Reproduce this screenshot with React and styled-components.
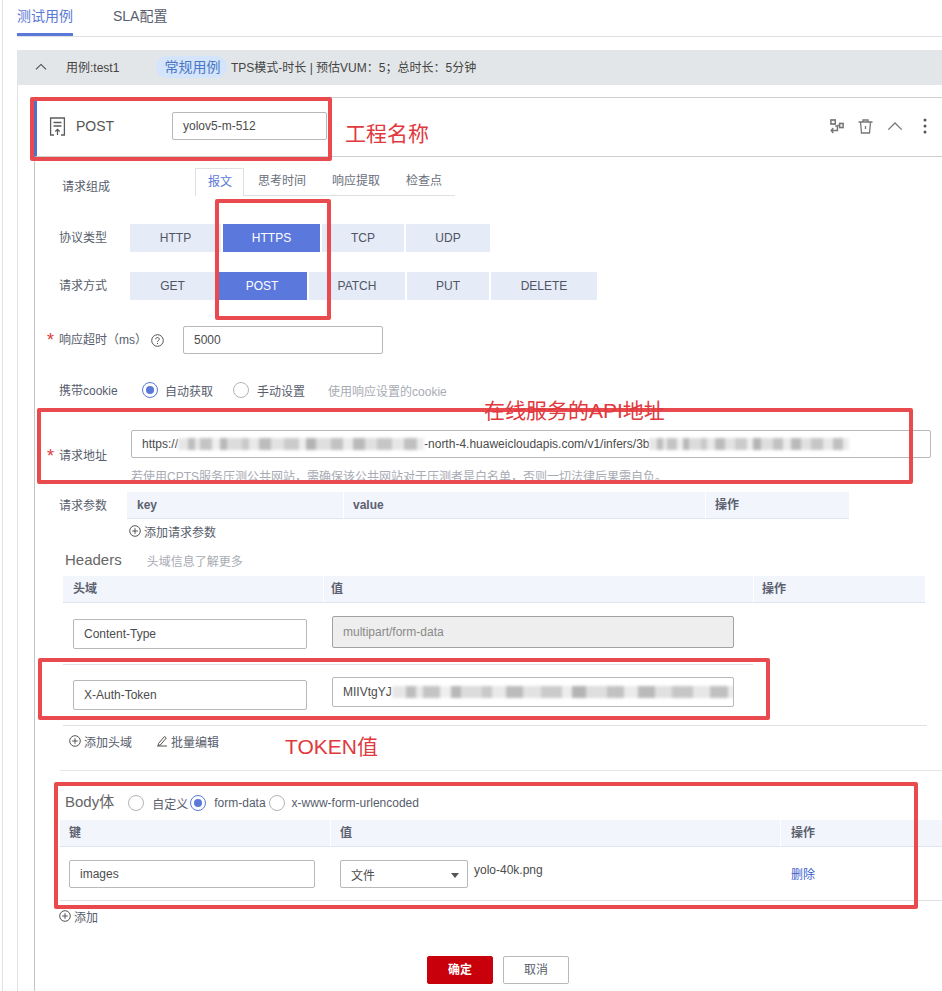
import React from "react";
import styled, { createGlobalStyle } from "styled-components";

const GlobalStyle = createGlobalStyle`
  html, body {
    margin: 0;
    padding: 0;
    background: #fff;
  }
  body {
    font-family: "Liberation Sans", "Noto Sans CJK SC", sans-serif;
    font-size: 12px;
    color: #575d6c;
  }
`;

const Page = styled.div`
  position: relative;
  width: 942px;
  height: 991px;
  overflow: hidden;
  box-sizing: border-box;
  padding-left: 2px;
`;

const Shell = styled.div`
  border-left: 1px solid #e2e2e2;
  padding-left: 14px;
  height: 100%;
`;

const TopTabs = styled.div`
  display: flex;
  height: 36px;
  gap: 40px;
  border-bottom: 1px solid #dfe1e6;
`;

const TopTab = styled.div`
  height: 36px;
  box-sizing: border-box;
  padding-top: 8px;
  font-size: 14px;
  line-height: 16px;
  color: ${(p) => (p.$active ? "#5a78d8" : "#575d6c")};
  border-bottom: ${(p) => (p.$active ? "3px solid #5a78d8" : "none")};
`;

const CaseBar = styled.div`
  display: flex;
  align-items: center;
  box-sizing: border-box;
  margin-top: 13px;
  height: 35px;
  background: #e3e6e8;
  padding: 0 0 2px 18px;
  color: #444;
`;

const CaseName = styled.span`
  margin-left: 19px;
  width: 90px;
`;

const Pill = styled.span`
  width: 71px;
  height: 22px;
  line-height: 22px;
  box-sizing: border-box;
  padding-left: 2px;
  text-align: center;
  border-radius: 11px;
  background: #d3e4fb;
  color: #4a76c4;
  font-size: 14px;
  margin-right: 4px;
`;

const CaseBody = styled.div`
  border-left: 1px solid #e2e2e2;
  padding: 12px 0 0 16px;
  height: 906px;
`;

const Panel = styled.div`
  border-left: 1px solid #c4c4c4;
  padding-left: 1px;
  height: 100%;
`;

const PanelHeader = styled.div`
  display: flex;
  align-items: center;
  box-sizing: border-box;
  height: 60px;
  margin-left: -2px;
  border-top: 1px solid #cfcfcf;
  border-bottom: 1px solid #cfcfcf;
  border-left: 3px solid #5470c6;
  padding: 0 0 2px 12px;
`;

const MethodName = styled.span`
  margin-left: 10px;
  width: 96px;
  font-size: 14px;
  color: #555;
`;

const TextInput = styled.div`
  display: flex;
  align-items: center;
  box-sizing: border-box;
  width: ${(p) => p.$w}px;
  height: ${(p) => p.$h || 28}px;
  margin-top: ${(p) => p.$top || 0}px;
  padding-left: ${(p) => p.$pad || 10}px;
  border: 1px solid ${(p) => (p.$disabled ? "#a2a2a2" : "#b8b8b8")};
  border-radius: 2px;
  background: ${(p) => (p.$disabled ? "#eeeeee" : "#fff")};
  color: ${(p) => (p.$disabled ? "#8a8a8a" : "#4c4c4c")};
  white-space: nowrap;
  overflow: hidden;
  flex: none;
`;

const HeaderActions = styled.div`
  display: flex;
  align-items: center;
  margin-left: auto;
  gap: 14px;
  padding-right: 15px;
  color: #777;
`;

const MoreSlot = styled.span`
  display: flex;
  margin-left: 6px;
`;

const Row = styled.div`
  display: flex;
  align-items: ${(p) => p.$align || "center"};
  margin-top: ${(p) => p.$top || 0}px;
  padding-left: ${(p) => (p.$pad === undefined ? 23 : p.$pad)}px;
  height: ${(p) => (p.$h ? `${p.$h}px` : "auto")};
`;

const Label = styled.span`
  width: ${(p) => p.$w || 71}px;
  flex: none;
  margin-top: ${(p) => p.$down || 0}px;
  margin-bottom: ${(p) => (p.$lift === undefined ? 4 : p.$lift)}px;
  color: #575d6c;
  white-space: nowrap;
`;

const Star = styled.span`
  width: 12px;
  flex: none;
  margin-top: ${(p) => p.$down || 0}px;
  margin-bottom: ${(p) => (p.$lift === undefined ? 4 : p.$lift)}px;
  color: #e0393e;
  font-size: 18px;
  line-height: 14px;
  height: 10px;
`;

const SubTabs = styled.div`
  display: flex;
  width: 260px;
  height: 28px;
  box-sizing: border-box;
  border-bottom: 1px solid #dfe1e6;
`;

const SubTab = styled.div`
  flex: none;
  box-sizing: border-box;
  height: ${(p) => (p.$active ? 28 : 27)}px;
  line-height: 26px;
  padding: 0 ${(p) => (p.$active ? 11 : 12)}px 0 ${(p) => (p.$active ? 12 : 14)}px;
  white-space: nowrap;
  color: ${(p) => (p.$active ? "#5a78d8" : "#6a6f7c")};
  background: #fff;
  ${(p) => p.$active && "border: 1px solid #dfe1e6; border-bottom: none;"}
`;

const ChoiceGroup = styled.div`
  display: flex;
  gap: 2px;
`;

const Choice = styled.div`
  width: ${(p) => p.$w}px;
  height: 28px;
  line-height: 28px;
  text-align: center;
  background: ${(p) => (p.$active ? "#5b78dc" : "#e6ebf8")};
  color: ${(p) => (p.$active ? "#fff" : "#4f5563")};
`;

const HelpIcon = styled.svg`
  margin-left: 3px;
  margin-right: 19px;
  flex: none;
`;

const RadioMark = styled.span`
  display: inline-flex;
  align-items: center;
  justify-content: center;
  box-sizing: border-box;
  flex: none;
  width: 16px;
  height: 16px;
  border-radius: 50%;
  border: 1px solid ${(p) => (p.$on ? "#5a78d8" : "#b4b4b4")};
  margin-left: ${(p) => p.$left || 0}px;
  margin-right: ${(p) => p.$right}px;
  &::after {
    content: "";
    width: 8px;
    height: 8px;
    border-radius: 50%;
    background: ${(p) => (p.$on ? "#5a78d8" : "transparent")};
  }
`;

const RadioText = styled.span`
  color: #575d6c;
  margin-right: ${(p) => p.$right || 0}px;
  white-space: nowrap;
`;

const Hint = styled.span`
  color: #a8abb3;
  margin-left: ${(p) => p.$left || 0}px;
`;

const HintLine = styled.div`
  margin-top: 13px;
  margin-left: 95px;
  height: 12px;
  line-height: 12px;
  color: #a8abb3;
`;

const Mosaic = styled.span`
  display: inline-block;
  flex: none;
  width: ${(p) => p.$w}px;
  height: ${(p) => p.$h || 12}px;
  filter: blur(1.8px);
  background:
    linear-gradient(
      90deg,
      #e6e6e6 0 4%,
      #bdbdbd 4% 7%,
      #e8e8e8 7% 9%,
      #c4c4c4 9% 14%,
      #efefef 14% 17%,
      #b8b8b8 17% 20%,
      #dcdcdc 20% 26%,
      #c9c9c9 26% 29%,
      #e9e9e9 29% 33%,
      #bcbcbc 33% 38%,
      #e2e2e2 38% 43%,
      #cbcbcb 43% 49%,
      #ededed 49% 52%,
      #b4b4b4 52% 56%,
      #dedede 56% 62%,
      #c2c2c2 62% 67%,
      #ebebeb 67% 71%,
      #bababa 71% 76%,
      #e0e0e0 76% 81%,
      #c6c6c6 81% 87%,
      #e7e7e7 87% 92%,
      #c0c0c0 92% 97%,
      #ececec 97% 100%
    );
`;

const Table = styled.div`
  display: grid;
  grid-template-columns: ${(p) => p.$cols};
  margin-left: ${(p) => p.$left}px;
  margin-top: ${(p) => p.$top || 0}px;
  width: ${(p) => p.$width}px;
  flex: none;
`;

const HeadCell = styled.div`
  height: 27px;
  line-height: 26px;
  box-sizing: border-box;
  padding-left: ${(p) => p.$pad || 10}px;
  background: #f2f5fc;
  border-bottom: 1px solid #dfe4ee;
  border-left: ${(p) => (p.$first ? "none" : "1px solid #fff")};
  font-weight: 700;
  color: #5c6170;
`;

const IconLink = styled.span`
  display: inline-flex;
  align-items: center;
  gap: 3px;
  margin-right: ${(p) => p.$right || 0}px;
  color: #575d6c;
`;

const SectionTitle = styled.span`
  font-size: 15px;
  color: #666;
  white-space: nowrap;
  margin-bottom: ${(p) => p.$lift || 0}px;
`;

const HeaderRow = styled.div`
  display: flex;
  box-sizing: border-box;
  margin-left: 27px;
  width: ${(p) => p.$w}px;
  height: ${(p) => p.$h}px;
  padding-left: 10px;
  border-bottom: 1px solid #dfe1e6;
`;

const ValueSlot = styled.div`
  margin-left: 25px;
`;

const Divider = styled.div`
  margin-top: 22px;
  margin-left: 24px;
  border-top: 1px solid #e6e6e6;
`;

const BodyRow = styled.div`
  display: flex;
  box-sizing: border-box;
  margin-left: 24px;
  width: 882px;
  height: 54px;
  padding: 13px 0 0 9px;
  border-bottom: 1px solid #dfe1e6;
`;

const Select = styled(TextInput)`
  position: relative;
  margin-left: 25px;
  &::after {
    content: "";
    position: absolute;
    right: 8px;
    top: 12px;
    border-left: 4px solid transparent;
    border-right: 4px solid transparent;
    border-top: 5px solid #555;
  }
`;

const FileName = styled.span`
  margin: 1px 0 0 6px;
  line-height: 18px;
  color: #4c4c4c;
  width: 317px;
`;

const DeleteLink = styled.span`
  margin-top: 5px;
  color: #3a5fd0;
`;

const FooterBar = styled.div`
  display: flex;
  gap: 10px;
  margin-top: 33px;
  margin-left: 391px;
`;

const Button = styled.div`
  box-sizing: border-box;
  width: 66px;
  height: 28px;
  line-height: 26px;
  text-align: center;
  border-radius: 2px;
  border: 1px solid ${(p) => (p.$primary ? "#c7000b" : "#b8b8b8")};
  background: ${(p) => (p.$primary ? "#c7000b" : "#fff")};
  color: ${(p) => (p.$primary ? "#fff" : "#575d6c")};
  font-weight: ${(p) => (p.$primary ? 700 : 400)};
`;

// red marks someone drew over the screenshot
const RedBox = styled.div`
  position: absolute;
  left: ${(p) => p.$x}px;
  top: ${(p) => p.$y}px;
  width: ${(p) => p.$w}px;
  height: ${(p) => p.$h}px;
  box-sizing: border-box;
  border: 4px solid #e84a4e;
  border-radius: 2px;
`;

const RedNote = styled.span`
  position: absolute;
  left: ${(p) => p.$x}px;
  top: ${(p) => p.$y}px;
  font-size: 21px;
  line-height: 24px;
  color: #e0393e;
  white-space: nowrap;
`;

const PlusIcon = () => (
  <svg width="12" height="12" viewBox="0 0 12 12" fill="none" stroke="#555" strokeWidth="1">
    <circle cx="6" cy="6" r="5.3" />
    <path d="M6 3.2v5.6M3.2 6h5.6" />
  </svg>
);

const PenIcon = () => (
  <svg width="12" height="12" viewBox="0 0 12 12" fill="none" stroke="#555" strokeWidth="1">
    <path d="M1 11h10M2.5 8.5 8.5 1.5l1.8 1.5-6 7-2.2.4z" />
  </svg>
);

const RequestIcon = () => (
  <svg width="17" height="19" viewBox="0 0 17 19" fill="none" stroke="#5c5c5c" strokeWidth="1.3">
    <path d="M5 18H1.6V1h13.8v17H12" />
    <path d="M4.5 5.5h8M4.5 9h8M8.5 18v-5.5M6.3 14.5l2.2-2.2 2.2 2.2" />
  </svg>
);

const FlowIcon = () => (
  <svg width="14" height="15" viewBox="0 0 16 15" fill="none" stroke="#777" strokeWidth="1.7" preserveAspectRatio="none">
    <rect x="1" y="1" width="5" height="4" />
    <rect x="11" y="4.5" width="4" height="4" />
    <path d="M6 7H8.5V11.5H1.5M3.8 9.2 1.5 11.5 3.8 13.8M8.5 6.5h2.5" />
  </svg>
);

const TrashIcon = () => (
  <svg width="15" height="15" viewBox="0 0 15 15" fill="none" stroke="#777" strokeWidth="1.3">
    <path d="M.5 3h14M5 3V1h5v2M2.5 3l1 11h8l1-11M7.5 7v3" />
  </svg>
);

const UpIcon = ({ size = 16, color = "#777" }) => (
  <svg width={size} height={size * 0.6} viewBox="0 0 16 10" fill="none" stroke={color} strokeWidth="1.4">
    <path d="M1 9l7-7 7 7" />
  </svg>
);

const MoreIcon = () => (
  <MoreSlot>
    <svg width="4" height="16" viewBox="0 0 4 16" fill="#555">
      <circle cx="2" cy="2" r="1.5" />
      <circle cx="2" cy="8" r="1.5" />
      <circle cx="2" cy="14" r="1.5" />
    </svg>
  </MoreSlot>
);

const QuestionIcon = () => (
  <HelpIcon width="13" height="13" viewBox="0 0 13 13" fill="none" stroke="#555">
    <circle cx="6.5" cy="6.5" r="5.8" />
    <path d="M4.7 5.2c0-2.3 3.6-2.3 3.6 0 0 1.3-1.8 1.2-1.8 2.7M6.5 9v1" />
  </HelpIcon>
);

const protocols = [
  { name: "HTTP", w: 91 },
  { name: "HTTPS", w: 97, active: true },
  { name: "TCP", w: 82 },
  { name: "UDP", w: 84 },
];

const methods = [
  { name: "GET", w: 85 },
  { name: "POST", w: 90, active: true },
  { name: "PATCH", w: 96 },
  { name: "PUT", w: 82 },
  { name: "DELETE", w: 106 },
];

const App = () => (
  <Page>
    <GlobalStyle />
    <Shell>
      <TopTabs>
        <TopTab $active>测试用例</TopTab>
        <TopTab>SLA配置</TopTab>
      </TopTabs>

      <CaseBar>
        <UpIcon size={12} color="#444" />
        <CaseName>用例:test1</CaseName>
        <Pill>常规用例</Pill>
        <span>TPS模式-时长 | 预估VUM：5；总时长：5分钟</span>
      </CaseBar>

      <CaseBody>
        <Panel>
          <PanelHeader>
            <RequestIcon />
            <MethodName>POST</MethodName>
            <TextInput $w={155} $h={28}>yolov5-m-512</TextInput>
            <HeaderActions>
              <FlowIcon />
              <TrashIcon />
              <UpIcon size={16} />
              <MoreIcon />
            </HeaderActions>
          </PanelHeader>

          <Row $top={11} $h={28} $pad={26} $align="flex-start">
            <Label $w={133} $down={9} $lift={0}>请求组成</Label>
            <SubTabs>
              <SubTab $active>报文</SubTab>
              <SubTab>思考时间</SubTab>
              <SubTab>响应提取</SubTab>
              <SubTab>检查点</SubTab>
            </SubTabs>
          </Row>

          <Row $top={28} $h={28}>
            <Label>协议类型</Label>
            <ChoiceGroup>
              {protocols.map((item) => (
                <Choice key={item.name} $w={item.w} $active={item.active}>{item.name}</Choice>
              ))}
            </ChoiceGroup>
          </Row>

          <Row $top={20} $h={28}>
            <Label>请求方式</Label>
            <ChoiceGroup>
              {methods.map((item) => (
                <Choice key={item.name} $w={item.w} $active={item.active}>{item.name}</Choice>
              ))}
            </ChoiceGroup>
          </Row>

          <Row $top={26} $h={28} $pad={11}>
            <Star>*</Star>
            <Label $w={89}>响应超时（ms）</Label>
            <QuestionIcon />
            <TextInput $w={200} $h={28}>5000</TextInput>
          </Row>

          <Row $top={26} $h={20}>
            <Label $w={83} $lift={2}>携带cookie</Label>
            <RadioMark $on $right={7} />
            <RadioText $right={20}>自动获取</RadioText>
            <RadioMark $right={8} />
            <RadioText $right={23}>手动设置</RadioText>
            <Hint>使用响应设置的cookie</Hint>
          </Row>

          <Row $top={30} $h={28} $pad={11}>
            <Star $down={20} $lift={0}>*</Star>
            <Label $w={72} $down={20} $lift={0}>请求地址</Label>
            <TextInput $w={800} $h={28}>
              https://<Mosaic $w={246} />-north-4.huaweicloudapis.com/v1/infers/3b<Mosaic $w={200} />
            </TextInput>
          </Row>

          <HintLine>若使用CPTS服务压测公共网站，需确保该公共网站对于压测者是白名单，否则一切法律后果需自负。</HintLine>

          <Row $top={9} $h={27}>
            <Label $w={68} $lift={2}>请求参数</Label>
            <Table $cols="216px 362px 144px" $width={722} $left={0}>
              <HeadCell $first>key</HeadCell>
              <HeadCell $pad={9}>value</HeadCell>
              <HeadCell $pad={9}>操作</HeadCell>
            </Table>
          </Row>

          <Row $top={5} $h={14} $pad={93}>
            <IconLink><PlusIcon />添加请求参数</IconLink>
          </Row>

          <Row $top={14} $h={16} $pad={29}>
            <SectionTitle $lift={2}>Headers</SectionTitle>
            <Hint $left={25}>头域信息了解更多</Hint>
          </Row>

          <Table $cols="260px 430px 172px" $width={862} $left={27} $top={8}>
            <HeadCell $first>头域</HeadCell>
            <HeadCell $pad={7}>值</HeadCell>
            <HeadCell $pad={8}>操作</HeadCell>
          </Table>

          <HeaderRow $w={690} $h={62}>
            <TextInput $w={234} $h={30} $top={16}>Content-Type</TextInput>
            <ValueSlot>
              <TextInput $w={402} $h={32} $top={13} $disabled>multipart/form-data</TextInput>
            </ValueSlot>
          </HeaderRow>

          <HeaderRow $w={864} $h={61}>
            <TextInput $w={234} $h={30} $top={15}>X-Auth-Token</TextInput>
            <ValueSlot>
              <TextInput $w={402} $h={30} $top={12}>
                MIIVtgYJ<Mosaic $w={346} />
              </TextInput>
            </ValueSlot>
          </HeaderRow>

          <Row $top={8} $h={14} $pad={33}>
            <IconLink $right={24}><PlusIcon />添加头域</IconLink>
            <IconLink><PenIcon />批量编辑</IconLink>
          </Row>

          <Divider />

          <Row $top={23} $h={18} $pad={29}>
            <SectionTitle $lift={6}>Body体</SectionTitle>
            <RadioMark $left={14} $right={8} />
            <RadioText $right={2}>自定义</RadioText>
            <RadioMark $on $right={8} />
            <RadioText $right={3}>form-data</RadioText>
            <RadioMark $right={7} />
            <RadioText>x-www-form-urlencoded</RadioText>
          </Row>

          <Table $cols="270px 450px 162px" $width={882} $left={24} $top={8}>
            <HeadCell $first $pad={9}>键</HeadCell>
            <HeadCell $pad={9}>值</HeadCell>
            <HeadCell>操作</HeadCell>
          </Table>

          <BodyRow>
            <TextInput $w={246} $h={28}>images</TextInput>
            <Select $w={128} $h={28}>文件</Select>
            <FileName>yolo-40k.png</FileName>
            <DeleteLink>删除</DeleteLink>
          </BodyRow>

          <Row $top={8} $h={14} $pad={23}>
            <IconLink><PlusIcon />添加</IconLink>
          </Row>

          <FooterBar>
            <Button $primary>确定</Button>
            <Button>取消</Button>
          </FooterBar>
        </Panel>
      </CaseBody>
    </Shell>

    <RedBox $x={30} $y={97} $w={302} $h={64} />
    <RedBox $x={215} $y={199} $w={116} $h={121} />
    <RedBox $x={37} $y={408} $w={876} $h={76} />
    <RedBox $x={38} $y={658} $w={732} $h={62} />
    <RedBox $x={54} $y={782} $w={864} $h={127} />
    <RedNote $x={345} $y={122}>工程名称</RedNote>
    <RedNote $x={484} $y={399}>在线服务的API地址</RedNote>
    <RedNote $x={285} $y={735}>TOKEN值</RedNote>
  </Page>
);

export default App;
